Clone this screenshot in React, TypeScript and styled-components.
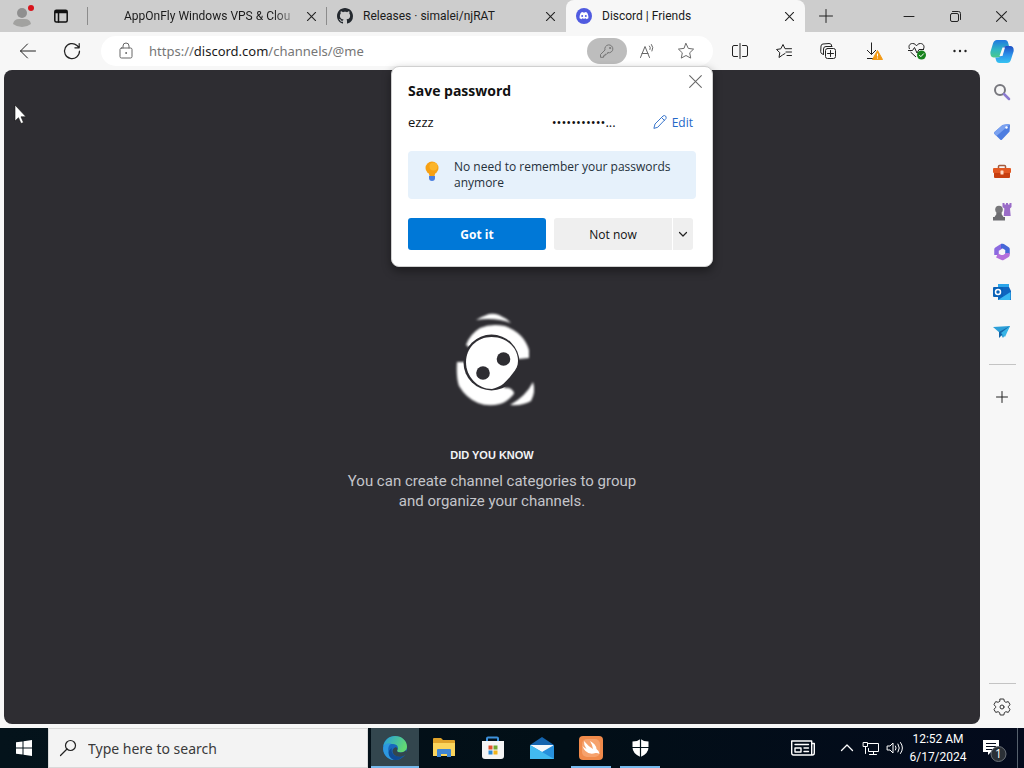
import React from "react";
import styled, { createGlobalStyle, css } from "styled-components";

const ui = `"Open Sans", "Noto Sans", sans-serif`;

const GlobalStyle = createGlobalStyle`
  * { box-sizing: border-box; }
  body { margin: 0; font-family: ${ui}; font-size: 12px; color: #1b1b1b; }
  button, input { font: inherit; color: inherit; }
  button { border: 0; padding: 0; background: none; cursor: default; }
  svg { display: block; flex: none; overflow: visible; }
  h2, p { margin: 0; }
`;

const Desktop = styled.div`
  position: relative;
  display: flex;
  flex-direction: column;
  min-height: 100vh;
`;

const TabStrip = styled.header`
  display: flex;
  height: 32px;
  background: #cdcdcd;
`;

const IconButton = styled.button<{ $w?: number }>`
  display: flex;
  align-items: center;
  justify-content: center;
  flex: none;
  width: ${(p) => p.$w ?? 44}px;
  height: 100%;
`;

const StripStart = styled.div`
  display: flex;
  flex: none;
  padding: 0 8px 0 4px;
`;

const Tabs = styled.div`
  display: flex;
  flex: 0 1 718px;
  min-width: 0;
  border-left: 1px solid transparent;
`;

const TabItem = styled.div<{ $active?: boolean; $divided?: boolean }>`
  position: relative;
  display: flex;
  align-items: center;
  flex: 1 1 0;
  min-width: 0;
  gap: 10px;
  padding: 0 8px 0 10px;
  ${(p) =>
    p.$active &&
    css`
      background: #f7f7f7;
      border-radius: 8px 8px 0 0;
    `}
  ${(p) =>
    p.$divided &&
    css`
      &::before {
        content: "";
        position: absolute;
        left: -1px;
        top: 7px;
        width: 1px;
        height: 18px;
        background: #8c8c8c;
      }
    `}
`;

const Favicon = styled.span`
  display: flex;
  flex: none;
  width: 16px;
  height: 16px;
`;

const TabTitle = styled.button<{ $fade?: boolean }>`
  flex: 1;
  min-width: 0;
  height: 100%;
  overflow: hidden;
  white-space: nowrap;
  text-align: left;
  font-family: Roboto, sans-serif;
  ${(p) => p.$fade && `mask-image: linear-gradient(90deg, #000 88%, transparent 105%);`}
`;

const WindowControls = styled.div`
  display: flex;
  margin-left: auto;
`;

const Browser = styled.div`
  display: flex;
  flex: 1;
  background: #f7f7f7;
`;

const Main = styled.main`
  display: flex;
  flex-direction: column;
  flex: 1;
  min-width: 0;
`;

const Toolbar = styled.div`
  display: flex;
  height: 38px;
  padding: 4px 0 4px 6px;
`;

const Address = styled.div`
  position: relative;
  display: flex;
  align-items: center;
  flex: 1;
  min-width: 0;
  margin: 0 5px 0 7px;
  padding: 0 8px 0 16px;
  border-radius: 15px;
  background: #fff;
`;

const UrlWrap = styled.div`
  flex: 1;
  min-width: 0;
  margin-left: 14px;
  font-family: "Noto Sans", sans-serif;
  font-size: 13px;
`;

const UrlText = styled.a`
  color: #767676;
  text-decoration: none;
  b { font-weight: 400; color: #1b1b1b; }
`;

const KeyPill = styled.button`
  display: flex;
  align-items: center;
  justify-content: center;
  width: 40px;
  height: 26px;
  border-radius: 13px;
  background: #bdbdbd;
`;

const Actions = styled.div`
  display: flex;
  margin-right: -2px;
`;

const Page = styled.section`
  display: flex;
  flex-direction: column;
  align-items: center;
  flex: 1;
  margin: 0 0 4px 4px;
  padding-top: 230px;
  border-radius: 8px;
  background: #2e2d32;
  text-align: center;
`;

const FactTitle = styled.h2`
  margin-top: 26px;
  font: 700 11px/18px "Liberation Sans", sans-serif;
  color: #f2f3f5;
`;

const Fact = styled.p`
  width: 300px;
  margin-top: 7px;
  font: 400 15px/20px Roboto, sans-serif;
  color: #c4c5ca;
`;

const Popup = styled.div`
  position: absolute;
  top: 30px;
  right: 0;
  z-index: 2;
  width: 322px;
  padding: 14px 16px 16px;
  border: 1px solid #d0d0d0;
  border-radius: 8px;
  background: #fff;
  box-shadow: 0 4px 10px rgba(0, 0, 0, 0.4);
  color: #111;
`;

const CloseButton = styled.button`
  position: absolute;
  top: 6px;
  right: 8px;
  padding: 2px;
`;

const PopupTitle = styled.h2`
  font-size: 14px;
  line-height: 20px;
  font-weight: 700;
`;

const Credential = styled.div`
  display: flex;
  align-items: center;
  height: 20px;
  margin-top: 11px;
  padding-right: 3px;
`;

const UserName = styled.span`
  flex: 1;
  font-size: 13px;
`;

const Secret = styled.span`
  width: 101px;
  font-size: 13px;
`;

const EditButton = styled.button`
  display: flex;
  align-items: center;
  gap: 5px;
  color: #2468c8;
`;

const Tip = styled.div`
  display: flex;
  gap: 12px;
  margin: 19px 0;
  padding: 8px 16px;
  border-radius: 4px;
  background: #e6f1fb;
  color: #24303a;
  line-height: 16px;
  font-weight: 500;
`;

const ButtonRow = styled.div`
  display: flex;
  height: 32px;
  padding-right: 3px;
`;

const Primary = styled.button`
  flex: 1;
  margin-right: 8px;
  border-radius: 3px;
  background: #0078d7;
  color: #fff;
  font-weight: 700;
`;

const Secondary = styled.button<{ $w: number }>`
  display: flex;
  align-items: center;
  justify-content: center;
  width: ${(p) => p.$w}px;
  background: #efefef;
  border-radius: 3px 0 0 3px;
  font-weight: 500;
  & + & {
    border-left: 1px solid #fff;
    border-radius: 0 3px 3px 0;
  }
`;

const Sidebar = styled.aside`
  display: flex;
  flex-direction: column;
  align-items: center;
  flex: none;
  width: 44px;
`;

const SideButton = styled.button`
  display: flex;
  align-items: center;
  justify-content: center;
  width: 40px;
  height: 40px;
`;

const Rule = styled.hr<{ $push?: boolean }>`
  width: 27px;
  margin: ${(p) => (p.$push ? "auto 0 4px" : "12px 0")};
  border: 0;
  border-top: 1px solid #c4c4c4;
  & + button:last-child { height: 38px; margin-bottom: 2px; }
`;

const Taskbar = styled.footer`
  display: flex;
  flex: none;
  height: 40px;
  background: linear-gradient(90deg, #04131b, #020f17 55%, #030a1c);
  color: #fff;
`;

const Search = styled.label`
  display: flex;
  align-items: center;
  flex: 0 1 320px;
  min-width: 0;
  gap: 12px;
  padding: 0 11px;
  border: 1px solid #d9d9d9;
  background: #f3f3f3;
  color: #3a3a3a;
  input {
    flex: 1;
    min-width: 0;
    padding: 0;
    border: 0;
    outline: 0;
    background: none;
    font-family: "Noto Sans", sans-serif;
    font-size: 14px;
  }
  input::placeholder { color: #3a3a3a; opacity: 1; }
`;

const Apps = styled.nav`
  display: flex;
  gap: 1px;
  margin-left: 3px;
`;

const AppButton = styled.button<{ $state?: "active" | "open" }>`
  position: relative;
  display: flex;
  align-items: center;
  justify-content: center;
  width: 48px;
  height: 40px;
  background: ${(p) => (p.$state === "active" ? "#33464e" : "none")};
  ${(p) =>
    p.$state &&
    css`
      &::after {
        content: "";
        position: absolute;
        bottom: 0;
        left: ${p.$state === "active" ? 0 : 4}px;
        right: ${p.$state === "active" ? 0 : 4}px;
        height: 2px;
        background: #76b9ed;
      }
    `}
`;

const Tray = styled.div`
  display: flex;
  align-items: stretch;
  margin-left: auto;
`;

const NewsButton = styled(IconButton)`
  margin-right: 20px;
`;

const Clock = styled.button`
  width: 62px;
  line-height: 18px;
  text-align: center;
  font-family: Roboto, sans-serif;
`;

const Corner = styled.span`
  width: 7px;
  border-left: 1px solid #56606c;
`;

const Pointer = styled.svg`
  position: absolute;
  left: 15px;
  top: 105px;
  z-index: 3;
`;

type LineProps = { size?: number; w?: number; color?: string; children: React.ReactNode; box?: number };
const Line = ({ size = 20, w = 1, color = "#222", box, children }: LineProps) => (
  <svg width={size} height={size} viewBox={`0 0 ${box ?? size} ${box ?? size}`} fill="none" stroke={color} strokeWidth={w} strokeLinecap="round" strokeLinejoin="round">
    {children}
  </svg>
);

const Cross = ({ size = 9, w = 1.2, color = "#222" }) => (
  <Line size={size} box={10} w={w} color={color}><path d="M.5 .5l9 9M9.5 .5l-9 9" /></Line>
);

const GitHub = () => (
  <svg width="16" height="16" viewBox="0 0 16 16" fill="#24292f">
    <path d="M8 0C3.58 0 0 3.58 0 8c0 3.54 2.29 6.53 5.47 7.59.4.07.55-.17.55-.38 0-.19-.01-.82-.01-1.49-2.01.37-2.53-.49-2.69-.94-.09-.23-.48-.94-.82-1.13-.28-.15-.68-.52-.01-.53.63-.01 1.08.58 1.23.82.72 1.21 1.87.87 2.33.66.07-.52.28-.87.51-1.07-1.78-.2-3.64-.89-3.64-3.95 0-.87.31-1.59.82-2.15-.08-.2-.36-1.02.08-2.12 0 0 .67-.21 2.2.82.64-.18 1.32-.27 2-.27s1.36.09 2 .27c1.53-1.04 2.2-.82 2.2-.82.44 1.1.16 1.92.08 2.12.51.56.82 1.27.82 2.15 0 3.07-1.87 3.75-3.65 3.95.29.25.54.73.54 1.48 0 1.07-.01 1.93-.01 2.2 0 .21.15.46.55.38A8.01 8.01 0 0 0 16 8c0-4.42-3.58-8-8-8z" />
  </svg>
);

const DiscordIcon = () => (
  <svg width="16" height="16" viewBox="0 0 16 16">
    <circle cx="8" cy="8" r="8" fill="#505be0" />
    <path fill="#fff" d="M5.1 4.5c.6-.3 1.1-.4 1.6-.5l.3.5a8 8 0 0 1 2 0l.3-.5c.6.1 1.1.3 1.6.5 1.2 1.8 1.7 3.6 1.5 5.7-.6.5-1.3.8-2 1l-.5-.8.6-.3a5.5 5.5 0 0 1-5 0l.6.3-.5.8c-.7-.2-1.4-.5-2-1-.2-2.1.3-3.9 1.5-5.7z" />
    <circle cx="6.2" cy="8.1" r="1" fill="#505be0" /><circle cx="9.8" cy="8.1" r="1" fill="#505be0" />
  </svg>
);

const Star = ({ color = "#6b6b6b" }) => (
  <Line size={18} color={color}><path d="M9 1.5l2.3 4.9 5.3.7-3.9 3.7 1 5.3L9 13.5l-4.7 2.6 1-5.3L1.4 7.1l5.3-.7z" /></Line>
);

const Doodle = () => (
  <svg width="130" height="120" viewBox="-3 0 130 120" aria-label="Loading">
    <defs>
      <filter id="soft" x="-20%" y="-20%" width="140%" height="140%"><feGaussianBlur stdDeviation="0.8" /></filter>
      <filter id="edge"><feGaussianBlur stdDeviation="0.4" /></filter>
    </defs>
    <g fill="#fff" filter="url(#soft)">
      <path d="M46 20q7-4 13-6 5-1 10 1 7 3 12 8-16-6-35-3z" />
      <path d="M36 45Q40 34 50 28q11-5 25-2 19 7 24 24v8l-10 1-29 3z" />
      <path d="M27 62h8l25 3 15 23q5-1 8 3 2 2 0 4-6 7-13 9-12 3-22-1-12-5-19-17-3-9-2-24z" />
      <path d="M103 82q3 10-2 19-8 5-21 4 16-9 23-23z" />
    </g>
    <circle cx="61.5" cy="62.5" r="28" fill="#2e2d32" />
    <path fill="#fff" filter="url(#edge)" d="M61.500 37C76 37 88 47 88 61c0 5-2 8-5 12-6 8-11 14-21 16C47 89 36 76 36 62c0-14 11-25 25.500-25z" />
    <circle cx="73.500" cy="59" r="6.800" fill="#2e2d32" />
    <circle cx="53" cy="73" r="6.800" fill="#2e2d32" />
  </svg>
);

const Copilot = () => (
  <svg width="24" height="24" viewBox="0 0 24 24">
    <defs>
      <linearGradient id="cpa" x1="0" y1="0" x2="0" y2="1"><stop offset="0" stopColor="#1f77e0" /><stop offset=".55" stopColor="#2fb6c4" /><stop offset="1" stopColor="#4cc98a" /></linearGradient>
      <linearGradient id="cpb" x1="0" y1="0" x2="0" y2="1"><stop offset="0" stopColor="#1d4fc4" /><stop offset=".5" stopColor="#2c8fe8" /><stop offset="1" stopColor="#36c3f2" /></linearGradient>
    </defs>
    <path fill="url(#cpa)" d="M7 0h8q2.500 0 3.200 3l.8 3h-3q-2.300 0-3 2.500l-2 7q-.6 2-2.800 2H3.500Q0 17 .4 12L3 3.500Q4 0 7 0z" />
    <path fill="url(#cpb)" d="M17 23H9.500q-3 0-3.500-3l-.7-2.500h3q2 0 2.700-2.500l2-7q.7-2 3-2h4Q24 6 23.700 11L21 19.500q-1 3.500-4 3.500z" />
    <path fill="#f7f7f7" d="M12.500 7.500h2.500l-2.500 8.500H9.500z" />
  </svg>
);

const sideIcons: [string, React.ReactNode][] = [
  ["Search", <Line size={18} w={2} color="#77777d" key="i"><circle cx="7" cy="7" r="5" /><path d="M11 11l5 5" stroke="#8b7bd0" strokeWidth="2.500" /></Line>],
  ["Shopping", <svg key="i" width="18" height="18" viewBox="0 0 18 18"><path fill="#4d7de0" d="M9.500 2l6-1q1.500 0 1.500 1.500l-.4 6-7.500 8q-1 1-2 0L1.500 11q-1-1 0-2z" /><path fill="#7ba2f0" d="M9.500 2l6-1q1 0 1.300.6L3.500 13l-2-2q-1-1 0-2z" /><circle cx="13.500" cy="4.500" r="1.200" fill="#fff" /></svg>],
  ["Tools", <svg key="i" width="18" height="18" viewBox="0 0 18 18"><path d="M5.500 5V3.500q0-1 1-1h5q1 0 1 1V5" fill="none" stroke="#a45a3c" strokeWidth="1.500" /><rect y="5" width="18" height="5" rx="1" fill="#e25822" /><path fill="#c73f10" d="M1 10h16v4q0 1-1 1H2q-1 0-1-1z" /><rect x="7.500" y="7.500" width="3" height="4" rx=".5" fill="#ffd9c4" /></svg>],
  ["Games", <svg key="i" width="18" height="18" viewBox="0 0 18 18"><path fill="#9a6cc8" d="M9.500 0h2v1.500h1.500V0h2v1.500h1.500V0h2v4L17 5.500l.7 7.500h-7l.7-7.500L9.500 4z" /><circle cx="6" cy="6.500" r="3.800" fill="#77777a" /><path fill="#6c6c70" d="M3 9.500h6L8.500 11l2 3H1.500l2-3zM0 14h12v3.500H0z" /></svg>],
  ["Microsoft 365", <svg key="i" width="18" height="18" viewBox="0 0 18 18" fill="none" strokeWidth="4.500"><path d="M3.500 12V6.500L9 3" stroke="#8c6ae0" strokeLinejoin="round" /><path d="M8 3h2l4.500 3v5" stroke="#4667d8" strokeLinejoin="round" /><path d="M14.500 10v2L9.500 15 4 12.500" stroke="#b470dc" strokeLinejoin="round" /></svg>],
  ["Outlook", <svg key="i" width="18" height="18" viewBox="0 0 18 18"><path fill="#2aa5ea" d="M5 1h11v7H5z" /><path fill="#0f66c0" d="M5 4h11l2 4v9H5z" /><path fill="#38b9f2" d="M5 17l12.500-8v7q0 1-1 1z" /><rect y="4" width="10" height="10" rx="1" fill="#0a62b8" /><circle cx="5" cy="9" r="2.500" fill="none" stroke="#fff" strokeWidth="1.500" /></svg>],
  ["Drop", <svg key="i" width="18" height="18" viewBox="0 0 18 18"><path fill="#2c9fd8" d="M0 4l17-1-7 12-3-5z" /><path fill="#1466a8" d="M17 3L6 9v6l3-3z" /><path fill="#38b4e6" d="M17 3L8 10l4 4z" /></svg>],
];

const taskApps: { name: string; state?: "active" | "open"; icon: React.ReactNode }[] = [
  { name: "Microsoft Edge", state: "active", icon: (
    <svg width="24" height="24" viewBox="0 0 24 24"><defs><linearGradient id="eg" x1="0" y1="0" x2="1" y2=".4"><stop stopColor="#239ce0" /><stop offset="1" stopColor="#62d873" /></linearGradient></defs><circle cx="12" cy="12" r="12" fill="#1868bd" /><path fill="url(#eg)" d="M.3 10C1.500 4 6 0 12 0c7 0 12 5 12 10.500 0 4-3 6-6.500 6-3 0-4-1.500-3.200-2.500 1.500-2 .5-6-4.300-6C5.500 8 1.500 9 .3 10z" /><path fill="#2d98df" d="M.2 11C1 7.500 5 6.500 8.500 7.500 4 9 3.500 19 11 24 4 24-.8 17 .2 11z" /><path fill="#104b95" d="M9 12c-2 5 3 10 11 8-3 4-8 5-11 3-5-4-4-9 0-11z" /><path fill="#33464e" d="M14.300 14c-.8 1 .2 2.500 3.200 2.500 2.500 0 4.500-.9 5.600-2.500l.9 3-3.500 3c-6 2-11-1-11-5 0-2 1.500-3 2.500-3.500 1-.4 3 0 2.300 2.500z" /></svg>) },
  { name: "File Explorer", icon: (
    <svg width="22" height="20" viewBox="0 0 22 20"><path fill="#e0a32a" d="M0 1q0-1 1-1h7l2 2h11q1 0 1 1v15H0z" /><path fill="#fbd55c" d="M0 5h22v13H0z" /><path fill="#3f86d3" d="M4 18v-6q0-1 1-1h12q1 0 1 1v7h-4v-3H8v3H4z" /></svg>) },
  { name: "Microsoft Store", icon: (
    <svg width="24" height="24" viewBox="0 0 24 24"><path d="M6 6V2.500q0-1 1-1h9q1 0 1 1V6" fill="none" stroke="#3d91dc" strokeWidth="2" /><path fill="#f5f5f5" d="M1 5h22v15q0 3-3 3H4q-3 0-3-3z" /><path fill="#e2512e" d="M7.500 9.500h4v4h-4z" /><path fill="#72a930" d="M12.500 9.500h4v4h-4z" /><path fill="#2b8ad6" d="M7.500 14.500h4v4h-4z" /><path fill="#f2b51c" d="M12.500 14.500h4v4h-4z" /></svg>) },
  { name: "Mail", icon: (
    <svg width="24" height="22" viewBox="0 0 24 22"><path fill="#1464ae" d="M0 8L12 0l12 8v6H0z" /><path fill="#f4f8fb" d="M1 8h22v8H1z" /><path fill="#2790dc" d="M0 8l12 7 12-7v14H0z" /><path fill="#42baf0" d="M0 8l24 14H0z" /></svg>) },
  { name: "Remote client", state: "open", icon: (
    <svg width="24" height="24" viewBox="0 0 24 24"><rect width="24" height="24" rx="4" fill="#f08a4b" /><rect x="3" y="3" width="18" height="18" rx="5" fill="#f6a26d" /><path fill="#fff" d="M5 5q4 5 9 8-1-5-3-8 6 3 6.500 8 3 2 3 5-2-1.500-4-1-6 2-10-2-2-2-3-5 2 2 4 3-3-4-2.500-8z" /></svg>) },
  { name: "Windows Security", state: "open", icon: (
    <svg width="17" height="18" viewBox="0 0 17 18"><path fill="#fff" d="M8.500 0q3 2.500 8 2.500v6q0 6-8 9.500-8-3.500-8-9.500v-6q5 0 8-2.500z" /><path stroke="#04131b" strokeWidth="1.200" d="M8.500 0v18M0 8.500h17" /></svg>) },
];

export default function App() {
  return (
    <Desktop>
      <GlobalStyle />
      <TabStrip>
        <StripStart>
          <IconButton $w={38} aria-label="Profile">
            <svg width="20" height="22" viewBox="0 0 20 22"><circle cx="9" cy="8" r="5" fill="#8f8f8f" /><path fill="#a2a2a0" d="M0 19q1-5 6-5h6q5 0 6 5-4 3-9 3t-9-3z" /><circle cx="18" cy="3" r="3" fill="#d8141c" /></svg>
          </IconButton>
          <IconButton $w={37} aria-label="Tab actions menu">
            <Line size={14} w={1.500} color="#111"><rect x=".8" y="1.300" width="12.400" height="11.600" rx="1.500" /><path d="M1 3h12" strokeWidth="2.500" strokeLinecap="butt" /><path d="M4.500 4v9" /></Line>
          </IconButton>
        </StripStart>
        <Tabs>
          <TabItem $divided>
            <Favicon />
            <TabTitle $fade>AppOnFly Windows VPS &amp; Clou</TabTitle>
            <IconButton $w={16} aria-label="Close tab"><Cross /></IconButton>
          </TabItem>
          <TabItem $divided>
            <Favicon><GitHub /></Favicon>
            <TabTitle>Releases · simalei/njRAT</TabTitle>
            <IconButton $w={16} aria-label="Close tab"><Cross /></IconButton>
          </TabItem>
          <TabItem $active>
            <Favicon><DiscordIcon /></Favicon>
            <TabTitle>Discord | Friends</TabTitle>
            <IconButton $w={16} aria-label="Close tab"><Cross /></IconButton>
          </TabItem>
        </Tabs>
        <IconButton $w={42} aria-label="New tab"><Line size={14}><path d="M7 .5v13M.5 7h13" /></Line></IconButton>
        <WindowControls>
          <IconButton $w={46} aria-label="Minimize"><Line size={10}><path d="M0 5.500h10" /></Line></IconButton>
          <IconButton $w={46} aria-label="Restore"><Line size={11}><rect x=".5" y="2.500" width="8" height="8" rx="1.500" /><path d="M2.500 .5h6q2 0 2 2v6" /></Line></IconButton>
          <IconButton $w={46} aria-label="Close"><Cross size={11} w={1} /></IconButton>
        </WindowControls>
      </TabStrip>

      <Browser>
        <Main>
          <Toolbar>
            <IconButton aria-label="Back"><Line size={16}><path d="M.5 8h15M7.500 1L.5 8l7 7" /></Line></IconButton>
            <IconButton aria-label="Refresh"><Line size={16} w={1.200}><path d="M15.500 8A7.500 7.500 0 1 1 13 2.500L15 4.500M15.200 .5v4.300h-4.300" /></Line></IconButton>
            <Address>
              <Line size={18} color="#666"><rect x="3" y="6" width="12" height="10" rx="1.500" /><path d="M6 6V4a3 3 0 0 1 6 0v2" /><circle cx="9" cy="11" r=".5" /></Line>
              <UrlWrap><UrlText href="#">https://<b>discord.com</b>/channels/@me</UrlText></UrlWrap>
              <KeyPill aria-label="Saved passwords">
                <Line size={16} color="#777"><path d="M9 9.800L7.500 11.300H6v1.500H4.500v1.500h-3v-2.800L6 7a4 4 0 1 1 3 2.800z" /><circle cx="11" cy="5" r=".6" /></Line>
              </KeyPill>
              <IconButton $w={40} aria-label="Read aloud"><Line size={18} color="#666"><path d="M2.500 15.500l4.500-11 4.500 11M4 11.500h6M11.500 4q1.500 1.500 .5 3.500M13.500 2.500q2.500 3 .5 6.500" /></Line></IconButton>
              <IconButton $w={38} aria-label="Add to favorites"><Star /></IconButton>
              <Popup role="dialog" aria-label="Save password">
                <CloseButton aria-label="Close"><Cross size={13} w={0.800} color="#666" /></CloseButton>
                <PopupTitle>Save password</PopupTitle>
                <Credential>
                  <UserName>ezzz</UserName>
                  <Secret>•••••••••••...</Secret>
                  <EditButton><Line size={14} color="#3a76cc"><path d="M1 13l1-4L10 1q1.500-1 2.500 0t.5 2.500L5 12zM8.500 2.500l3 3" /></Line>Edit</EditButton>
                </Credential>
                <Tip>
                  <svg width="18" height="24" viewBox="0 0 18 24"><circle cx="8" cy="9" r="6.500" fill="#f7a012" /><circle cx="9.500" cy="7.500" r="4" fill="#fcb52a" /><path fill="#f7a012" d="M4.500 13h7l-1 4h-5z" /><path fill="#4a7fe0" d="M5 17h6v2q0 3-3 3t-3-3z" /></svg>
                  <p>No need to remember your passwords anymore</p>
                </Tip>
                <ButtonRow>
                  <Primary>Got it</Primary>
                  <Secondary $w={118}>Not now</Secondary>
                  <Secondary $w={21} aria-label="More options"><Line size={8} w={1.200}><path d="M.5 2.500L4 6l3.500-3.500" /></Line></Secondary>
                </ButtonRow>
              </Popup>
            </Address>
            <Actions>
              <IconButton aria-label="Split screen"><Line size={16}><path d="M5.500 2.500H2q-1.500 0-1.500 1.500v8Q.5 13.500 2 13.500h3.500M10.500 2.500H14q1.500 0 1.500 1.500v8q0 1.500-1.500 1.500h-3.500M8 .5v15" /></Line></IconButton>
              <IconButton aria-label="Favorites"><Line size={16}><path d="M9 10.500L6.500 12 3 14.500l.8-4.800L.5 6.500l4.300-.7L7 1.500l2 4.200h6.500M10 9h5.500M11 12.500h4.500" /></Line></IconButton>
              <IconButton aria-label="Collections"><Line size={16}><rect x="5.500" y="5.500" width="10" height="10" rx="2" /><path d="M10.500 7.500v6M7.500 10.500h6M3.500 11.500L2 10.800Q.5 10 .7 8.500L1 3q.3-2 2-2l6-.5q2 0 2.500 1.500v1M3.500 11V6q0-2.500 2.500-2.500h6" /></Line></IconButton>
              <IconButton aria-label="Downloads"><svg width="18" height="18" viewBox="-2 0 18 18" fill="none" stroke="#222"><path d="M6.500 .5v12M2 8l4.500 4.500L11 8M2 16.500h8" /><path d="M12.500 8.500L17.500 17.500h-10z" fill="#f39a16" stroke="#f39a16" strokeLinejoin="round" /><path d="M12.500 11.500v3M12.500 15.500v1" stroke="#fff" /></svg></IconButton>
              <IconButton aria-label="Browser essentials"><svg width="18" height="18" viewBox="-1 0 18 18" fill="none" stroke="#222"><path d="M1.500 7C0 3.500 2 1.500 4.500 1.500S8 3 8.500 4c.5-1 1.500-2.500 4-2.500S17 4 15.500 7M2.500 10l5.500 5M0 8.500h4.500L6.500 5.500 9 11l2-3.500h5" strokeLinejoin="round" /><circle cx="13.500" cy="13" r="4.500" fill="#16831c" stroke="none" /><path d="M11.300 13l1.500 1.700 3-3.200" stroke="#fff" /></svg></IconButton>
              <IconButton aria-label="Settings and more"><svg width="14" height="4" viewBox="0 0 14 4" fill="#222"><circle cx="1.500" cy="2" r="1.200" /><circle cx="7" cy="2" r="1.200" /><circle cx="12.500" cy="2" r="1.200" /></svg></IconButton>
            </Actions>
          </Toolbar>
          <Page>
            <Doodle />
            <FactTitle>DID YOU KNOW</FactTitle>
            <Fact>You can create channel categories to group and organize your channels.</Fact>
          </Page>
        </Main>
        <Sidebar>
          <SideButton aria-label="Copilot"><Copilot /></SideButton>
          {sideIcons.map(([name, icon]) => <SideButton key={name} aria-label={name}>{icon}</SideButton>)}
          <Rule />
          <SideButton aria-label="Customize"><Line size={12}><path d="M6 .5v11M.5 6h11" /></Line></SideButton>
          <Rule $push />
          <SideButton aria-label="Settings"><Line size={18} color="#333"><path d="M7.200 1h3.600l.6 2.400 1.500.9 2.400-.7 1.800 3.100L15.300 8.400v1.200l1.800 1.700-1.800 3.100-2.400-.7-1.500.9-.6 2.400H7.200l-.6-2.400-1.500-.9-2.400.7-1.800-3.100 1.800-1.700V8.400L.9 6.700l1.800-3.100 2.400.7 1.500-.9z" /><circle cx="9" cy="9" r="2" /></Line></SideButton>
        </Sidebar>
      </Browser>

      <Taskbar>
        <IconButton $w={48} aria-label="Start"><svg width="16" height="16" viewBox="0 0 16 16" fill="#fff"><path d="M0 2.300L6.500 1.400v6.100H0zM7.500 1.200L16 0v7.500H7.500zM0 8.500h6.500v6.100L0 13.700zM7.500 8.500H16V16l-8.500-1.200z" /></svg></IconButton>
        <Search>
          <Line size={16} w={1.200}><circle cx="10.500" cy="5.500" r="5" /><path d="M7 9L.5 15.500" /></Line>
          <input type="text" placeholder="Type here to search" aria-label="Search" />
        </Search>
        <Apps>
          {taskApps.map((a) => <AppButton key={a.name} $state={a.state} aria-label={a.name}>{a.icon}</AppButton>)}
        </Apps>
        <Tray>
          <NewsButton $w={24} aria-label="News"><Line size={24} w={1.400} color="#fff"><path d="M.7 5h20v14H2.500Q.7 19 .7 17zM20.700 7.500h2.600V17q0 2-2 2h-2M4 8.500h13.500M4 12h6v4H4zM13 12h4.500M13 15.500h4.500" /></Line></NewsButton>
          <IconButton $w={24} aria-label="Show hidden icons"><Line size={12} w={1.300} color="#fff"><path d="M.5 8.500L6 3l5.500 5.500" /></Line></IconButton>
          <IconButton $w={24} aria-label="Network"><Line size={16} color="#fff"><path d="M5.500 3.500h10v8h-10v-3M.5 2.500h4v4h-4zM2.500 6.500v7M10.500 11.500v3M6.500 14.500h7" /></Line></IconButton>
          <IconButton $w={24} aria-label="Volume"><Line size={16} color="#fff"><path d="M.5 6h2.500l3-3v10l-3-3H.5zM8.500 6q1.300 2 0 4M11 4q2.700 4 0 8M13.500 2.500q4 5.500 0 11" /></Line></IconButton>
          <Clock>12:52 AM<br />6/17/2024</Clock>
          <IconButton $w={48} aria-label="Notifications">
            <svg width="24" height="24" viewBox="-1 0 24 24"><path fill="#fff" d="M1 4h16v12H9l-3 3v-3H1z" /><path stroke="#030a1c" d="M4 7.500h10M4 10.500h10M4 13.500h6" /><circle cx="16.500" cy="18" r="7.500" fill="#2b3036" stroke="#6a7078" /><text x="16.500" y="22" textAnchor="middle" fontSize="12" fill="#fff">1</text></svg>
          </IconButton>
          <Corner />
        </Tray>
      </Taskbar>
      <Pointer width="12" height="19" viewBox="0 0 12 19"><path fill="#fff" stroke="#111" strokeWidth=".6" d="M0 0v16l3.500-3.300L6 18.500l2.500-1L6 11.800h5z" /></Pointer>
    </Desktop>
  );
}
